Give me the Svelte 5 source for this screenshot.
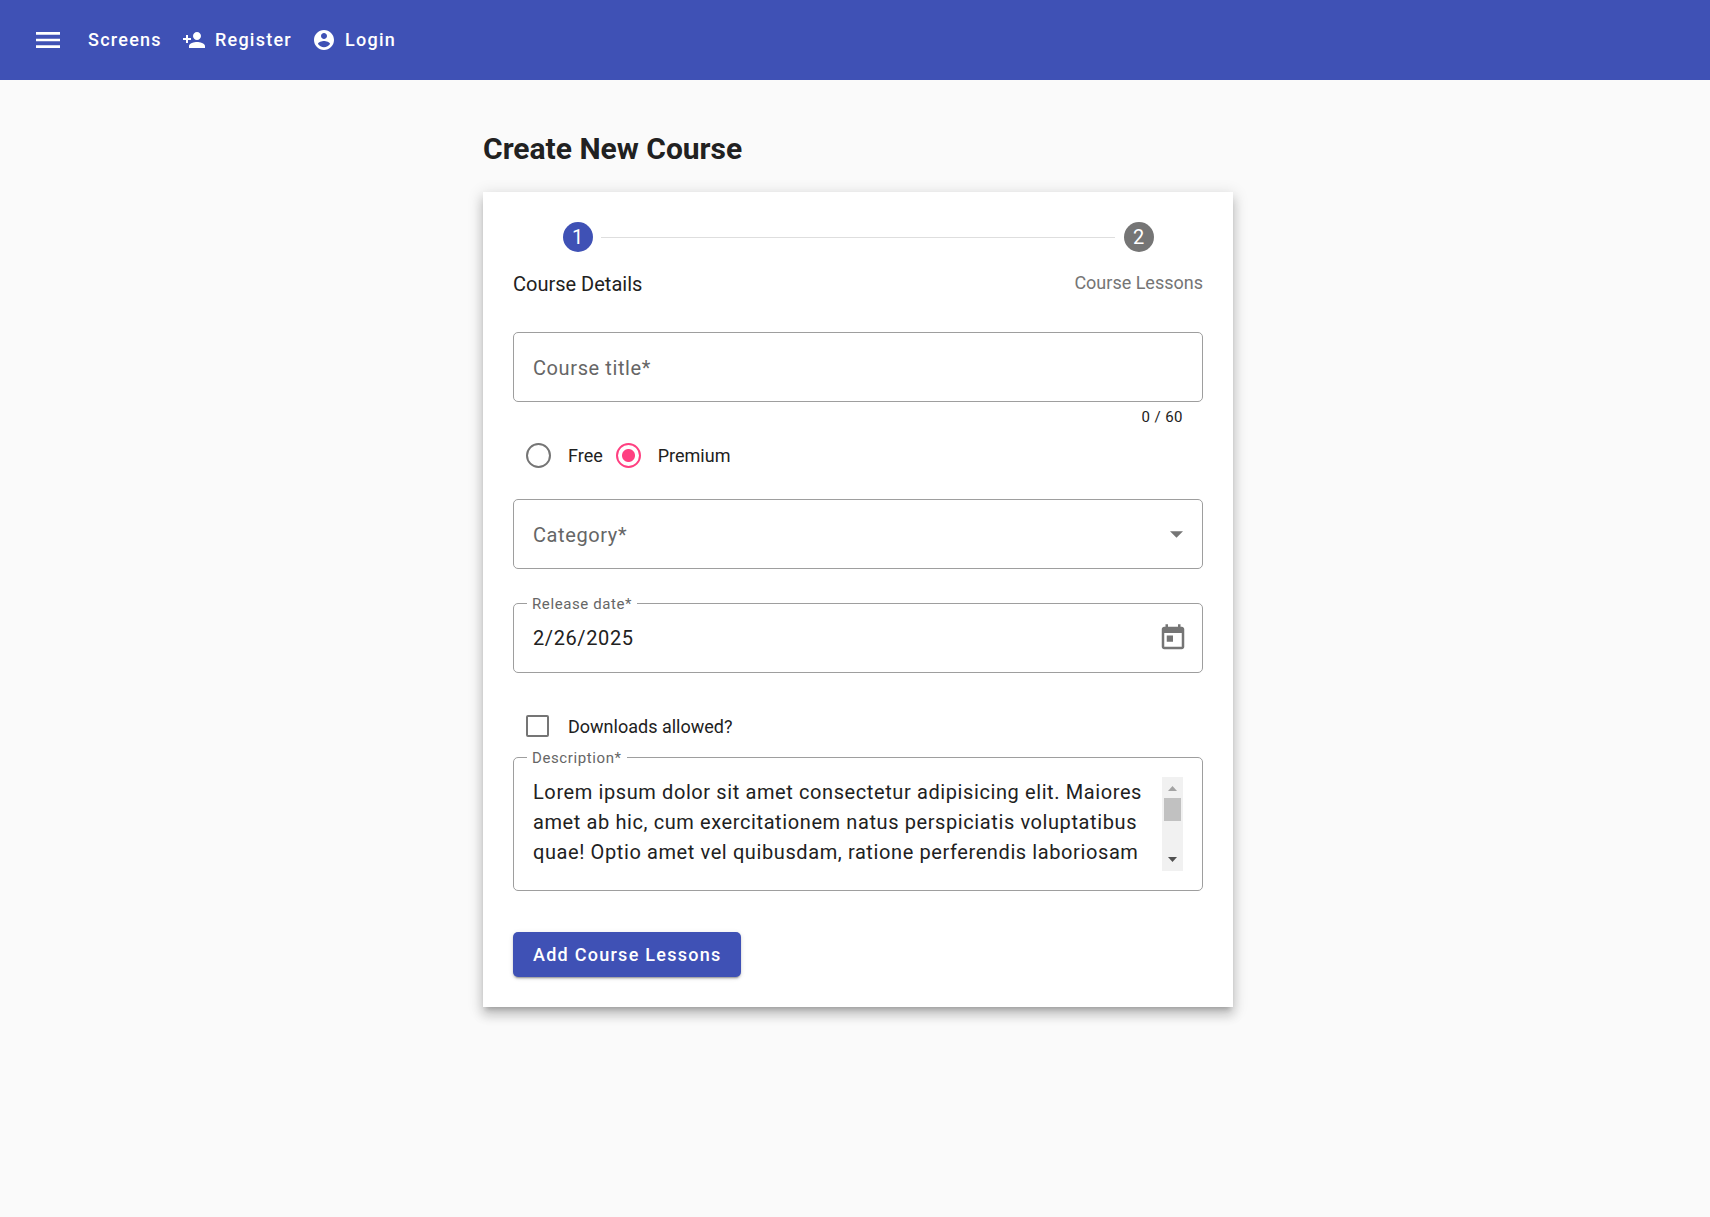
<script>
  let title = $state('');
  let pricing = $state('premium');
  let category = $state('');
  let releaseDate = $state('2/26/2025');
  let downloads = $state(false);
  let description = $state(
    'Lorem ipsum dolor sit amet consectetur adipisicing elit. Maiores amet ab hic, cum exercitationem natus perspiciatis voluptatibus quae! Optio amet vel quibusdam, ratione perferendis laboriosam dolorum, numquam eius quis ducimus temporibus architecto. Lorem ipsum dolor sit amet consectetur adipisicing elit. Maiores amet ab hic, cum exercitationem natus perspiciatis voluptatibus quae!'
  );
  let area;

  function scroll(amount) {
    area.scrollTop += amount;
  }
</script>

<header>
  <button class="menu" type="button" aria-label="Open menu">
    <svg viewBox="0 0 24 24" width="32" height="32"><path d="M3 18h18v-2H3v2zm0-5h18v-2H3v2zm0-7v2h18V6H3z" /></svg>
  </button>
  <nav>
    <a href="#screens">Screens</a>
    <a href="#register">
      <svg viewBox="0 0 24 24" width="24" height="24"><path d="M15 12c2.21 0 4-1.79 4-4s-1.79-4-4-4-4 1.79-4 4 1.79 4 4 4zm-9-2V7H4v3H1v2h3v3h2v-3h3v-2H6zm9 4c-2.67 0-8 1.34-8 4v2h16v-2c0-2.66-5.33-4-8-4z" /></svg>
      <span>Register</span>
    </a>
    <a href="#login">
      <svg viewBox="0 0 24 24" width="24" height="24"><path d="M12 2C6.48 2 2 6.48 2 12s4.48 10 10 10 10-4.48 10-10S17.52 2 12 2zm0 3c1.66 0 3 1.34 3 3s-1.34 3-3 3-3-1.34-3-3 1.34-3 3-3zm0 14.2c-2.5 0-4.71-1.28-6-3.22.03-1.99 4-3.08 6-3.08 1.99 0 5.97 1.09 6 3.08-1.29 1.94-3.5 3.22-6 3.22z" /></svg>
      <span>Login</span>
    </a>
  </nav>
</header>

<main>
  <h1>Create New Course</h1>
  <form class="card" onsubmit={(e) => e.preventDefault()}>
    <div class="stepper">
      <span class="dot active">1</span>
      <span class="line"></span>
      <span class="dot last">2</span>
      <span class="step current">Course Details</span>
      <span class="step end">Course Lessons</span>
    </div>

    <div class="field">
      <label class="inner" class:filled={title} for="title">Course title*</label>
      <input id="title" type="text" maxlength="60" bind:value={title} />
    </div>
    <div class="hint">{title.length} / 60</div>

    <div class="choices">
      <label><input type="radio" name="pricing" value="free" bind:group={pricing} /><span>Free</span></label>
      <label><input type="radio" name="pricing" value="premium" bind:group={pricing} /><span>Premium</span></label>
    </div>

    <div class="field category">
      <label class="inner" class:filled={category} for="category">Category*</label>
      <select id="category" bind:value={category}>
        <option value=""></option>
        <option value="beginner">Beginner</option>
        <option value="intermediate">Intermediate</option>
        <option value="advanced">Advanced</option>
      </select>
      <svg class="arrow" viewBox="0 0 12 6" width="13" height="7"><path d="M0 0h12L6 6z" /></svg>
    </div>

    <div class="field release">
      <label class="floating" for="release">Release date*</label>
      <input id="release" type="text" bind:value={releaseDate} />
      <button class="calendar" type="button" aria-label="Open calendar">
        <svg viewBox="0 0 24 24" width="30" height="30"><path d="M19 3h-1V1h-2v2H8V1H6v2H5c-1.11 0-1.99.9-1.99 2L3 19c0 1.1.89 2 2 2h14c1.1 0 2-.9 2-2V5c0-1.1-.9-2-2-2zm0 16H5V8h14v11zM7 10h5v5H7z" /></svg>
      </button>
    </div>

    <div class="choices downloads">
      <label><input type="checkbox" bind:checked={downloads} /><span>Downloads allowed?</span></label>
    </div>

    <div class="field description">
      <label class="floating" for="description">Description*</label>
      <textarea id="description" rows="3" bind:this={area} bind:value={description}></textarea>
      <div class="scrollbar">
        <button class="up" type="button" aria-label="Scroll up" onclick={() => scroll(-30)}>
          <svg viewBox="0 0 9 5" width="9" height="5"><path fill="#a3a3a3" d="M0 5L4.500 0 9 5z" /></svg>
        </button>
        <span class="thumb"></span>
        <button class="down" type="button" aria-label="Scroll down" onclick={() => scroll(30)}>
          <svg viewBox="0 0 9 5" width="9" height="5"><path fill="#505050" d="M0 0h9L4.500 5z" /></svg>
        </button>
      </div>
    </div>

    <button class="submit" type="submit">Add Course Lessons</button>
  </form>
</main>

<style>
  :global(body) {
    background: #fafafa;
    color: #212121;
    font-family: Roboto, 'Liberation Sans', sans-serif;
    font-size: 18px;
  }

  svg {
    display: block;
    fill: currentColor;
  }

  button,
  input,
  select,
  textarea {
    margin: 0;
    padding: 0;
    border: 0;
    border-radius: 0;
    background: none;
    color: inherit;
    font: inherit;
    letter-spacing: inherit;
    outline: none;
  }

  button {
    cursor: pointer;
  }

  header {
    display: flex;
    align-items: center;
    gap: 24px;
    height: 80px;
    padding: 0 32px;
    box-sizing: border-box;
    background: #3f51b5;
    color: #fff;
  }

  nav {
    display: flex;
    gap: 20px;
    font-weight: 500;
    letter-spacing: 0.07em;
  }

  nav a {
    display: flex;
    align-items: center;
    gap: 9px;
    color: inherit;
    text-decoration: none;
    line-height: 24px;
  }

  main {
    max-width: 750px;
    margin: 0 auto;
    padding: 48px 0 48px 6px;
  }

  h1 {
    margin: 0 0 22px;
    font-size: 30px;
    line-height: 42px;
    font-weight: 700;
  }

  .card {
    padding: 30px;
    background: #fff;
    box-shadow:
      0 5px 5px -3px rgba(0, 0, 0, 0.2),
      0 8px 10px 1px rgba(0, 0, 0, 0.14),
      0 3px 14px 2px rgba(0, 0, 0, 0.12);
  }

  .stepper {
    display: grid;
    grid-template-columns: max-content 1fr max-content;
    align-items: center;
    row-gap: 16px;
    margin-bottom: 32px;
  }

  .dot {
    grid-area: 1 / 1;
    justify-self: center;
    width: 30px;
    border-radius: 50%;
    background: #757575;
    color: #fff;
    font-size: 20px;
    line-height: 30px;
    text-align: center;
  }

  .dot.active {
    background: #3f51b5;
  }

  .dot.last {
    grid-area: 1 / 3;
  }

  .line {
    grid-area: 1 / 1 / 2 / 4;
    margin: 0 88px;
    border-top: 1px solid #dedede;
  }

  .step {
    grid-row: 2;
    color: #757575;
    line-height: 32px;
  }

  .step.current {
    color: #212121;
    font-size: 20px;
  }

  .step.end {
    grid-column: 3;
    align-self: start;
    line-height: 30px;
  }

  .field {
    position: relative;
    display: grid;
    grid-template-columns: 1fr auto;
    align-items: center;
    min-height: 70px;
    padding: 0 19px;
    box-sizing: border-box;
    border: 1px solid #9e9e9e;
    border-radius: 5px;
    font-size: 20px;
    letter-spacing: 0.03em;
  }

  .field input,
  .field select {
    grid-area: 1 / 1;
    width: 100%;
    height: 30px;
    appearance: none;
  }

  .inner {
    grid-area: 1 / 1;
    padding-top: 2px;
    color: #666;
    line-height: 30px;
    pointer-events: none;
  }

  .inner.filled {
    visibility: hidden;
  }

  .floating {
    position: absolute;
    top: -10px;
    left: 13px;
    padding: 0 5px;
    background: #fff;
    color: #666;
    font-size: 15px;
    line-height: 20px;
  }

  .hint {
    padding: 5px 20px 0;
    font-size: 15px;
    line-height: 20px;
    letter-spacing: 0.03em;
    text-align: right;
  }

  .choices {
    display: flex;
    gap: 13px;
    padding: 15px 13px 0;
  }

  .choices label {
    display: flex;
    align-items: center;
    gap: 17px;
    height: 26px;
    line-height: 26px;
  }

  .choices span {
    padding-top: 2px;
  }

  .choices input {
    appearance: none;
    box-sizing: border-box;
    border: 2px solid #757575;
  }

  .choices input[type='radio'] {
    width: 25px;
    height: 25px;
    border-radius: 50%;
  }

  .choices input[type='radio']:checked {
    border-color: #ff4081;
    background: radial-gradient(circle, #ff4081 6px, transparent 7px);
  }

  .choices input[type='checkbox'] {
    width: 23px;
    height: 22px;
    margin-right: 2px;
    border-radius: 2px;
  }

  .choices input[type='checkbox']:checked {
    border-color: #ff4081;
    background: #ff4081;
  }

  .category {
    margin-top: 31px;
  }

  .arrow {
    color: #757575;
  }

  .release {
    margin-top: 34px;
    padding-right: 14px;
  }

  .calendar {
    color: #757575;
  }

  .downloads {
    padding-top: 40px;
  }

  .description {
    margin-top: 18px;
    padding: 19px;
  }

  textarea {
    height: 94px;
    resize: none;
    line-height: 30px;
    scrollbar-width: none;
  }

  .scrollbar {
    display: flex;
    flex-direction: column;
    align-items: center;
    width: 21px;
    height: 94px;
    background: #f1f1f1;
  }

  .scrollbar button {
    display: grid;
    place-items: center;
    box-sizing: border-box;
    width: 21px;
    height: 21px;
  }

  .scrollbar .up {
    padding-top: 2px;
  }

  .thumb {
    width: 17px;
    height: 23px;
    background: #c1c1c1;
  }

  .scrollbar .down {
    margin-top: auto;
    padding-bottom: 2px;
  }

  .submit {
    display: block;
    height: 45px;
    margin-top: 41px;
    padding: 0 20px;
    border-radius: 5px;
    background: #3f51b5;
    color: #fff;
    font-weight: 500;
    letter-spacing: 0.07em;
    box-shadow:
      0 3px 1px -2px rgba(0, 0, 0, 0.2),
      0 2px 2px 0 rgba(0, 0, 0, 0.14),
      0 1px 5px 0 rgba(0, 0, 0, 0.12);
  }
</style>
